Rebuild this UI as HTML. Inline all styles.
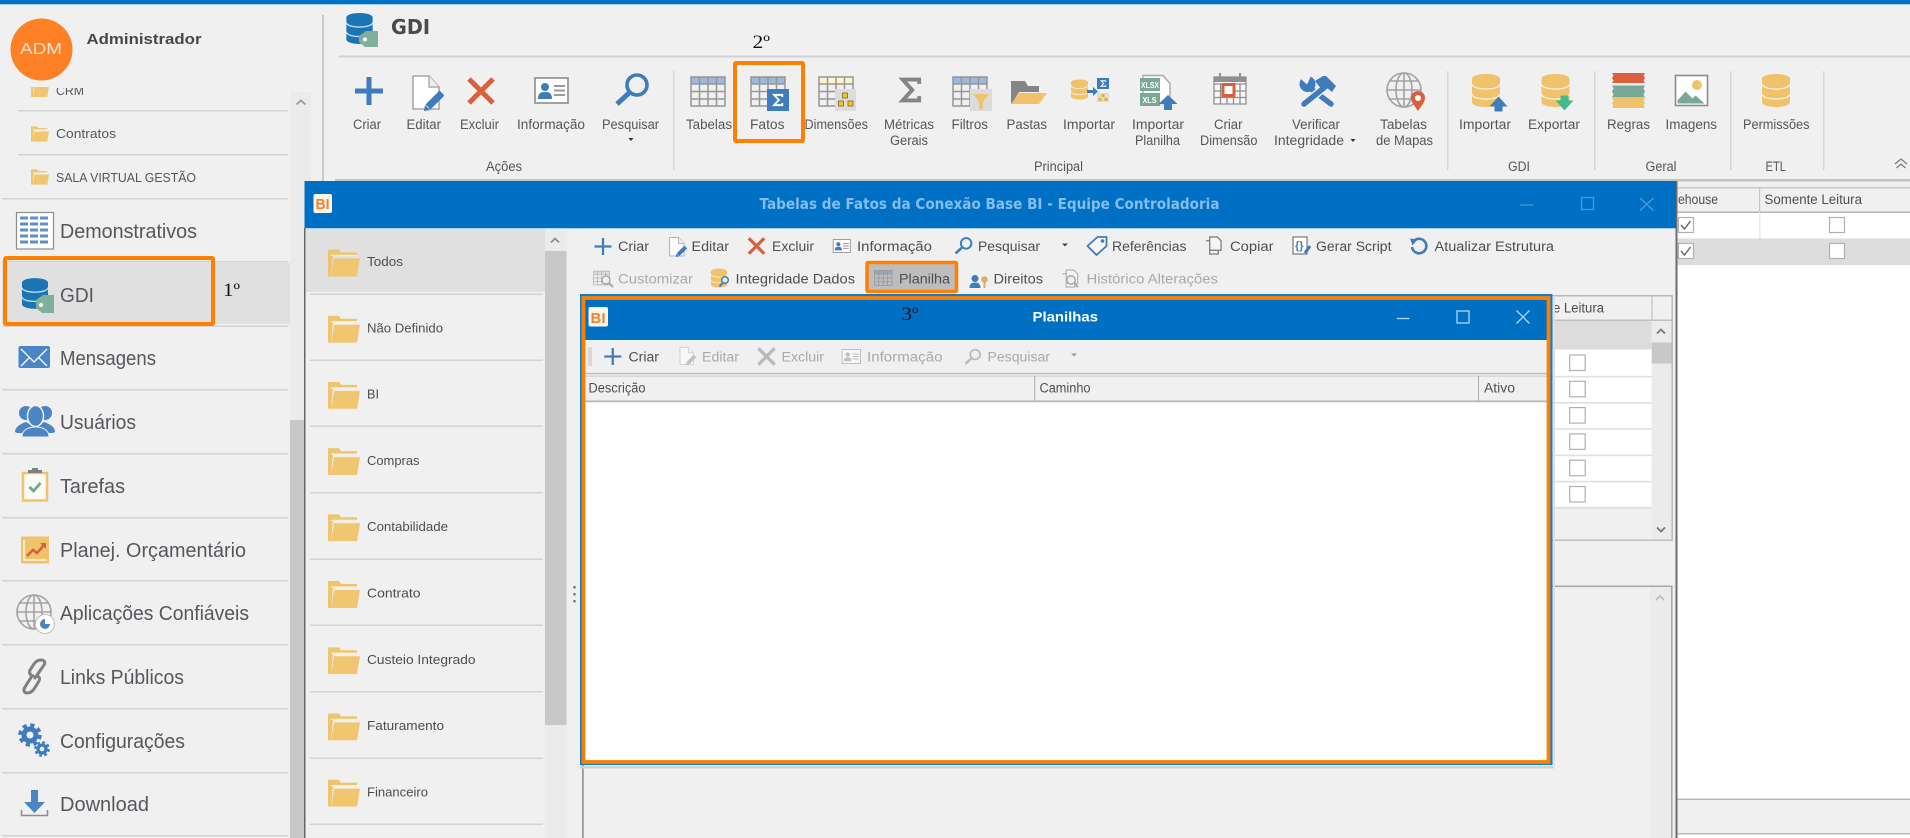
<!DOCTYPE html>
<html lang="pt-BR">
<head>
<meta charset="utf-8">
<title>GDI</title>
<style>
html,body{margin:0;padding:0;width:1910px;height:838px;overflow:hidden;background:#f0f0f0}
svg{display:block;position:absolute;left:0;top:0;filter:blur(.3px)}
text{font-family:"Liberation Sans",sans-serif;white-space:pre}
.s{font-size:20.5px;fill:#54575c}
.r{font-size:13.5px;fill:#54565a}
.f{font-size:13px;fill:#4c4e54}
.m{font-size:12.5px;fill:#54565a}
.t{font-size:13.5px;fill:#4c4e52}
.d{font-size:13.5px;fill:#a9a9a9}
text.k{font-size:19px;fill:#111;font-family:"Liberation Serif",serif}
</style>
</head>
<body>
<svg width="1910" height="838" viewBox="0 0 1910 838" xmlns="http://www.w3.org/2000/svg">
<defs>
<symbol id="folder" viewBox="0 0 32 27"><path d="M0 0h11l2 3h16v3H5L3 27H0z" fill="#eec56f"/><path d="M6 9h26l-3 18H3z" fill="#f0c670"/><path d="M3 6h26" stroke="#f9efd8" stroke-width="1.2"/></symbol>
<symbol id="db" viewBox="0 0 28 33"><path d="M0 5C0 2 6 0 14 0s14 2 14 5v23c0 3-6 5-14 5S0 31 0 28z" fill="currentColor"/><path d="M0 10c0 3 6 5 14 5s14-2 14-5M0 20c0 3 6 5 14 5s14-2 14-5" fill="none" stroke="#fff" stroke-opacity=".75" stroke-width="1.4"/></symbol>
<symbol id="plus" viewBox="0 0 28 28"><path d="M14 0v28M0 14h28" stroke="currentColor" stroke-width="5" fill="none"/></symbol>
<symbol id="plusT" viewBox="0 0 18 18"><path d="M9 0v18M0 9h18" stroke="currentColor" stroke-width="2.4" fill="none"/></symbol>
<symbol id="x" viewBox="0 0 28 28"><path d="M2 2l24 24M26 2L2 26" stroke="currentColor" stroke-width="5" fill="none"/></symbol>
<symbol id="edit" viewBox="0 0 32 36"><path d="M1 1h16l10 11v22H1z" fill="#fff" stroke="#a8a8a8" stroke-width="1.6"/><path d="M17 1v11h10" fill="#eee" stroke="#a8a8a8" stroke-width="1.4"/><path d="M30 18L16 32" stroke="currentColor" stroke-width="7" fill="none"/><path d="M12 36l1-6 5 5z" fill="currentColor"/></symbol>
<symbol id="card" viewBox="0 0 35 27"><rect x="1" y="1" width="33" height="25" fill="#fff" stroke="#8c8c8c" stroke-width="1.6"/><circle cx="11" cy="10" r="4" fill="currentColor"/><path d="M4 22c0-6 3-7 7-7s7 1 7 7z" fill="currentColor"/><path d="M20 9h11M20 13.500h11M20 18h11" stroke="#9a9a9a" stroke-width="2" fill="none"/></symbol>
<symbol id="search" viewBox="0 0 36 34"><circle cx="23" cy="12" r="10" fill="none" stroke="currentColor" stroke-width="3.6"/><path d="M15 20L3 31" stroke="currentColor" stroke-width="5" fill="none"/></symbol>
<symbol id="grid" viewBox="0 0 36 31"><rect x="1" y="1" width="34" height="7" fill="currentColor"/><path d="M1 1h34v29H1zM1 8h34M1 15.500h34M1 23h34M9.500 1v29M18 1v29M26.500 1v29" fill="none" stroke="#969696" stroke-width="1.5"/></symbol>
<symbol id="sigma" viewBox="0 0 28 30"><path d="M24 8V3H5l11 12L5 27h19v-5" fill="none" stroke="currentColor" stroke-width="4.5"/></symbol>
<symbol id="globe" viewBox="0 0 36 36"><circle cx="18" cy="18" r="17" fill="none" stroke="#a2a2a2" stroke-width="1.6"/><ellipse cx="18" cy="18" rx="8" ry="17" fill="none" stroke="#a2a2a2" stroke-width="1.6"/><path d="M18 1v34M1 18h34M4 9h28M4 27h28" stroke="#a2a2a2" stroke-width="1.6" fill="none"/></symbol>
<symbol id="docs" viewBox="0 0 18 20"><path d="M5 1h8l4 4v10H5z M1 5h4v14h9v-4" fill="#f6f6f6" stroke="currentColor" stroke-width="1.3"/></symbol>
<symbol id="gear" viewBox="0 0 24 24"><circle cx="12" cy="12" r="6" fill="none" stroke="currentColor" stroke-width="5"/><circle cx="12" cy="12" r="10" fill="none" stroke="currentColor" stroke-width="3.500" stroke-dasharray="4.200 3.650"/></symbol>
</defs>

<!-- background -->
<rect width="1910" height="838" fill="#f0f0f0"/>
<rect width="1910" height="4" fill="#0070c5"/>
<rect y="4" width="1910" height="1" fill="#9fd0f0"/>

<!-- sidebar top list clipped -->
<rect x="290" y="92" width="21" height="746" fill="#ebebeb"/>
<rect x="290" y="420" width="15" height="418" fill="#c8c8c8"/>
<path d="M296.500 104.500l4.500-4 4.500 4" stroke="#9a9a9a" stroke-width="1.800" fill="none"/>

<use href="#folder" x="31" y="82" width="18" height="15"/>
<rect x="31" y="78" width="18" height="9" fill="#f0f0f0"/>
<text class="m" x="56" y="95" textLength="28" lengthAdjust="spacingAndGlyphs">CRM</text>
<rect x="54" y="80" width="34" height="8" fill="#f0f0f0"/>
<rect x="18" y="110" width="270" height="1.500" fill="#d4d4d4"/>
<use href="#folder" x="31" y="126" width="18" height="16"/>
<text class="m" x="56" y="138" textLength="60" lengthAdjust="spacingAndGlyphs">Contratos</text>
<rect x="18" y="154" width="270" height="1.500" fill="#d4d4d4"/>
<use href="#folder" x="31" y="169" width="18" height="16"/>
<text class="m" x="56" y="182" textLength="140" lengthAdjust="spacingAndGlyphs">SALA VIRTUAL GESTÃO</text>
<rect x="2" y="198" width="286" height="1.500" fill="#d4d4d4"/>

<!-- avatar -->
<circle cx="41.500" cy="49.500" r="31" fill="#fd8024"/>
<text x="20" y="54" font-size="16" fill="#ffe3cf" textLength="42" lengthAdjust="spacingAndGlyphs">ADM</text>
<text x="86.500" y="44" font-size="15" font-weight="700" fill="#45474c" textLength="115" lengthAdjust="spacingAndGlyphs">Administrador</text>
<rect x="322" y="15" width="2" height="166" fill="#cacaca"/>

<!-- sidebar items -->
<rect x="16.500" y="212.500" width="37" height="36.500" fill="#fff" stroke="#8c8c8c" stroke-width="1.200"/>
<path d="M20 218h30M20 224h30M20 230h30M20 236h30M20 242h30" stroke="#5f8fc4" stroke-width="3" stroke-dasharray="8 2" fill="none"/>
<text class="s" x="60" y="238" textLength="137" lengthAdjust="spacingAndGlyphs">Demonstrativos</text>
<rect x="2" y="261" width="286" height="1.500" fill="#d4d4d4"/>
<rect x="2" y="263" width="288" height="61" fill="#e0e0e0"/>
<use href="#db" x="22" y="278" width="26" height="31" color="#1b75b5"/>
<path d="M36 300l7-5h11v18H42l-6-5z" fill="#7fb09a"/><circle cx="41" cy="305" r="2" fill="#fff"/>
<text class="s" x="60" y="302" textLength="34" lengthAdjust="spacingAndGlyphs">GDI</text>
<text class="k" x="223" y="296" textLength="17" lengthAdjust="spacingAndGlyphs">1º</text>
<rect x="2" y="325.500" width="286" height="1.500" fill="#d4d4d4"/>

<rect x="18.500" y="346" width="31.500" height="22" rx="2" fill="#4a86c6"/>
<path d="M21 349l13 13 13-13M21 366l9-9M47 366l-9-9" stroke="#f4f8fc" stroke-width="1.400" fill="none"/>
<text class="s" x="60" y="365" textLength="96" lengthAdjust="spacingAndGlyphs">Mensagens</text>
<rect x="2" y="389" width="286" height="1.500" fill="#d4d4d4"/>

<g fill="#4a86c6">
<circle cx="26" cy="413" r="7"/><circle cx="45" cy="413" r="7"/>
<path d="M15 432c0-5 5-8 11-10l10 6-4 5H17zM55 432c0-5-5-8-11-10l-10 6 4 5h15z"/>
</g>
<ellipse cx="35.500" cy="416" rx="8" ry="10.500" fill="#4a86c6" stroke="#f0f0f0" stroke-width="1.500"/>
<path d="M22 437c0-7 6-10 13.500-10S49 430 49 437z" fill="#4a86c6" stroke="#f0f0f0" stroke-width="1"/>
<text class="s" x="60" y="429" textLength="76" lengthAdjust="spacingAndGlyphs">Usuários</text>
<rect x="2" y="453" width="286" height="1.500" fill="#d4d4d4"/>

<rect x="23" y="473" width="24" height="27.500" fill="#fbfaf5" stroke="#efc26b" stroke-width="2.500"/>
<path d="M28 473v-3h4v-2h6v2h4v3z" fill="#7f7f7f"/>
<path d="M29.500 487l4 4 7-8" stroke="#6fa78e" stroke-width="2.800" fill="none"/>
<text class="s" x="60" y="493" textLength="65" lengthAdjust="spacingAndGlyphs">Tarefas</text>
<rect x="2" y="517" width="286" height="1.500" fill="#d4d4d4"/>

<rect x="21" y="536.500" width="28" height="27" fill="#efc26b"/>
<path d="M24 540v20h23" stroke="#fff" stroke-width="1.200" fill="none"/>
<path d="M27 556l6-6 4 3 7-8" stroke="#d9603f" stroke-width="2.600" fill="none"/><path d="M40 543h6v6z" fill="#d9603f"/>
<text class="s" x="60" y="557" textLength="186" lengthAdjust="spacingAndGlyphs">Planej. Orçamentário</text>
<rect x="2" y="580" width="286" height="1.500" fill="#d4d4d4"/>

<use href="#globe" x="16" y="594" width="36" height="36"/>
<circle cx="45" cy="624" r="9.500" fill="#fff" stroke="#bdbdbd"/>
<path d="M45 619v5h5a5 5 0 1 1-5-5z" fill="#4a86c6"/>
<text class="s" x="60" y="620" textLength="189" lengthAdjust="spacingAndGlyphs">Aplicações Confiáveis</text>
<rect x="2" y="644" width="286" height="1.500" fill="#d4d4d4"/>

<g fill="none" stroke="#808080" stroke-width="3" stroke-linecap="round">
<path d="M35 678l9-13c2-3 0-5-3-5s-5 1-7 4l-4 6c-1 3 0 5 3 6"/>
<path d="M37 676c3 1 3 3 2 5l-5 8c-2 3-4 4-7 4s-4-3-2-6l7-11"/>
</g>
<text class="s" x="60" y="684" textLength="124" lengthAdjust="spacingAndGlyphs">Links Públicos</text>
<rect x="2" y="708" width="286" height="1.500" fill="#d4d4d4"/>

<use href="#gear" x="18" y="723" width="24" height="24" color="#3f7cbc"/>
<use href="#gear" x="34" y="741" width="16" height="16" color="#3f7cbc"/>
<text class="s" x="60" y="748" textLength="125" lengthAdjust="spacingAndGlyphs">Configurações</text>
<rect x="2" y="772" width="286" height="1.500" fill="#d4d4d4"/>

<path d="M31 790h7v12h7l-10.500 11L24 802h7z" fill="#4a86c6"/>
<path d="M21.500 810v5.500h26V810" stroke="#8c8c8c" stroke-width="1.500" fill="none"/>
<text class="s" x="60" y="811" textLength="89" lengthAdjust="spacingAndGlyphs">Download</text>
<rect x="2" y="835" width="286" height="1.500" fill="#d4d4d4"/>

<!-- GDI header -->
<use href="#db" x="346" y="13" width="27" height="31" color="#1b75b5"/>
<path d="M359 36l7-5h12v16h-13l-6-5z" fill="#7fb09a"/><circle cx="365" cy="39.500" r="2" fill="#fff"/>
<text x="391" y="34" font-size="20" font-weight="700" fill="#4b4a48" style="font-family:'DejaVu Sans',sans-serif" textLength="39" lengthAdjust="spacingAndGlyphs">GDI</text>
<rect x="339" y="55.500" width="1571" height="2" fill="#d2d2d2"/>

<!-- ribbon icons -->
<use href="#plus" x="355" y="77" width="28" height="28" color="#3f7cbc"/>
<use href="#edit" x="412" y="75" width="32" height="36" color="#3f7cbc"/>
<use href="#x" x="467" y="77" width="28" height="28" color="#d9603f"/>
<use href="#card" x="534" y="77" width="35" height="27" color="#3f7cbc"/>
<use href="#search" x="614" y="73" width="36" height="34" color="#3f7cbc"/>
<use href="#grid" x="690" y="76" width="36" height="31" color="#9db8d8"/>
<use href="#grid" x="750" y="76" width="36" height="31" color="#9db8d8"/>
<rect x="767" y="89" width="22" height="22" fill="#3f7cbc"/>
<use href="#sigma" x="772" y="92" width="12" height="16" color="#fff"/>
<use href="#grid" x="818" y="76" width="36" height="31" color="#fdf3cf"/>
<rect x="835" y="89" width="21" height="22" fill="#dcdcdc"/>
<g fill="#f2c811" stroke="#7a6a30" stroke-width=".8"><rect x="842.500" y="93" width="5" height="5"/><rect x="838.500" y="101" width="5" height="5"/><rect x="848" y="101" width="5" height="5"/></g>
<use href="#sigma" x="898" y="77" width="25" height="26" color="#858585"/>
<use href="#grid" x="952" y="76" width="36" height="31" color="#9db8d8"/>
<rect x="970" y="89" width="22" height="22" fill="#dcdcdc"/>
<path d="M973 94h16l-6 8v7h-4v-7z" fill="#efc26b"/>
<path d="M1011 104V81h14l3 5h11v6h-20l-6 10z" fill="#858585"/>
<path d="M1011 104l8-11h28l-8 11z" fill="#efc26b"/>
<use href="#db" x="1071" y="79" width="17" height="21" color="#efc26b"/>
<path d="M1087 90h6v-3l5 4.500-5 4.500v-3h-6z" fill="#3f7cbc"/>
<rect x="1097" y="78" width="12" height="11" fill="#3f7cbc"/><use href="#sigma" x="1100" y="79.500" width="6.500" height="8" color="#fff"/>
<rect x="1097" y="93" width="12" height="9" fill="#dcdcdc"/>
<g fill="#e3b531"><rect x="1101.500" y="94" width="3" height="3"/><rect x="1098.500" y="98" width="3" height="3"/><rect x="1104.500" y="98" width="3" height="3"/></g>
<!-- import sheet -->
<path d="M1143 75.500h20l7 8v20h-27z" fill="#fff" stroke="#a8a8a8" stroke-width="1.400"/>
<rect x="1140" y="78" width="20" height="13" fill="#7aa896"/><rect x="1140" y="93" width="20" height="13" fill="#7aa896"/>
<text x="1141" y="88" font-size="8" font-weight="700" fill="#fff" textLength="18" lengthAdjust="spacingAndGlyphs">XLSX</text>
<text x="1142.500" y="103" font-size="8" font-weight="700" fill="#fff" textLength="14" lengthAdjust="spacingAndGlyphs">XLS</text>
<path d="M1168 95l9.500 9h-5.500v6h-8v-6h-5.500z" fill="#3f7cbc"/>
<!-- calendar -->
<path d="M1214 77h32v27h-32zM1214 84h32M1214 91h32M1214 97.500h32M1220.500 84v20M1227 84v20M1233.500 84v20M1240 84v20" fill="#f7f7f7" stroke="#8f8f8f" stroke-width="1.300"/>
<rect x="1214" y="77" width="32" height="5" fill="#8f8f8f"/><path d="M1220 73v6M1240 73v6" stroke="#8f8f8f" stroke-width="2"/>
<rect x="1223" y="84.500" width="11" height="11" fill="#fff" stroke="#d9603f" stroke-width="3"/>
<!-- tools: wrench + hammer -->
<path d="M1310 88l21 16" stroke="#3f7cbc" stroke-width="5.500" fill="none" stroke-linecap="round"/>
<circle cx="1307.500" cy="84" r="8" fill="#3f7cbc"/>
<path d="M1307 84.500l-9-8 5-3 6-.5 2 3z" fill="#f0f0f0"/>
<path d="M1325 87l-21 17" stroke="#f0f0f0" stroke-width="8.500" fill="none"/>
<path d="M1325 87l-21 17" stroke="#3f7cbc" stroke-width="5.500" fill="none" stroke-linecap="round"/>
<path d="M1315 81l8-5h3l10 10-4 6-6-5-4 3z" fill="#3f7cbc"/>
<!-- map globe -->
<use href="#globe" x="1386" y="72" width="36" height="36"/>
<path d="M1418 111c-4-6-7-9-7-13a7 7 0 0 1 14 0c0 4-3 7-7 13z" fill="#d9603f"/><circle cx="1418" cy="98" r="3" fill="#fff"/>
<!-- gdi -->
<use href="#db" x="1472" y="74" width="28" height="33" color="#efc26b"/>
<path d="M1498.500 96.500l9 10h-5v5h-8v-5h-5z" fill="#3f7cbc"/>
<use href="#db" x="1541.500" y="74" width="28" height="33" color="#efc26b"/>
<path d="M1564.500 110.500l-9-10h5v-5h8v5h5z" fill="#43b98e"/>
<!-- regras -->
<path d="M1612 73h33l-1.500 2.500 1.500 2.500-1.500 2.500 1.500 2.500h-33l1.500-2.500-1.500-2.500 1.500-2.500z" fill="#dc6040"/>
<path d="M1612 85.500h33l-1.500 3 1.500 3-1.500 3 1.500 3h-33l1.500-3-1.500-3 1.500-3z" fill="#7aa896"/>
<path d="M1612 98h33l-1.500 2.500 1.500 2.500-1.500 2.500 1.500 2.500h-33l1.500-2.500-1.500-2.500 1.500-2.500z" fill="#efc26b"/>
<!-- imagens -->
<rect x="1675.500" y="75.500" width="32" height="30" fill="#fff" stroke="#8c8c8c" stroke-width="1.600"/>
<circle cx="1697" cy="85" r="5" fill="#efc26b"/>
<path d="M1677.500 103.500v-3l8-9 7 7 3-3 9 8z" fill="#7aa896"/>
<use href="#db" x="1762" y="74" width="28" height="33" color="#efc26b"/>

<!-- ribbon separators -->
<g fill="#d8d8d8"><rect x="673" y="71" width="1.500" height="99"/><rect x="1447" y="71" width="1.500" height="99"/><rect x="1594" y="71" width="1.500" height="99"/><rect x="1730" y="71" width="1.500" height="99"/><rect x="1823" y="71" width="1.500" height="99"/></g>

<!-- ribbon labels -->
<g>
<text class="r" x="353" y="129" textLength="28" lengthAdjust="spacingAndGlyphs">Criar</text>
<text class="r" x="406.500" y="129" textLength="34.500" lengthAdjust="spacingAndGlyphs">Editar</text>
<text class="r" x="460" y="129" textLength="39" lengthAdjust="spacingAndGlyphs">Excluir</text>
<text class="r" x="517" y="129" textLength="68" lengthAdjust="spacingAndGlyphs">Informação</text>
<text class="r" x="602" y="129" textLength="57" lengthAdjust="spacingAndGlyphs">Pesquisar</text>
<path d="M628.500 138h5l-2.500 3z" fill="#333"/>
<text class="r" x="486" y="171" textLength="36" lengthAdjust="spacingAndGlyphs">Ações</text>
<text class="r" x="686" y="129" textLength="46" lengthAdjust="spacingAndGlyphs">Tabelas</text>
<text class="r" x="750" y="129" textLength="34.500" lengthAdjust="spacingAndGlyphs">Fatos</text>
<text class="r" x="804.500" y="129" textLength="63.500" lengthAdjust="spacingAndGlyphs">Dimensões</text>
<text class="r" x="884" y="129" textLength="50" lengthAdjust="spacingAndGlyphs">Métricas</text>
<text class="r" x="890" y="145" textLength="38" lengthAdjust="spacingAndGlyphs">Gerais</text>
<text class="r" x="951.500" y="129" textLength="36.500" lengthAdjust="spacingAndGlyphs">Filtros</text>
<text class="r" x="1006.500" y="129" textLength="40.500" lengthAdjust="spacingAndGlyphs">Pastas</text>
<text class="r" x="1063" y="129" textLength="52" lengthAdjust="spacingAndGlyphs">Importar</text>
<text class="r" x="1132" y="129" textLength="52" lengthAdjust="spacingAndGlyphs">Importar</text>
<text class="r" x="1135" y="145" textLength="45" lengthAdjust="spacingAndGlyphs">Planilha</text>
<text class="r" x="1214" y="129" textLength="28.500" lengthAdjust="spacingAndGlyphs">Criar</text>
<text class="r" x="1200" y="145" textLength="57.500" lengthAdjust="spacingAndGlyphs">Dimensão</text>
<text class="r" x="1034" y="171" textLength="49" lengthAdjust="spacingAndGlyphs">Principal</text>
<text class="r" x="1292" y="129" textLength="48" lengthAdjust="spacingAndGlyphs">Verificar</text>
<text class="r" x="1274" y="145" textLength="70" lengthAdjust="spacingAndGlyphs">Integridade</text>
<path d="M1350.500 139h5l-2.500 3z" fill="#333"/>
<text class="r" x="1380" y="129" textLength="47" lengthAdjust="spacingAndGlyphs">Tabelas</text>
<text class="r" x="1376" y="145" textLength="57" lengthAdjust="spacingAndGlyphs">de Mapas</text>
<text class="r" x="1459" y="129" textLength="52" lengthAdjust="spacingAndGlyphs">Importar</text>
<text class="r" x="1528" y="129" textLength="52" lengthAdjust="spacingAndGlyphs">Exportar</text>
<text class="r" x="1508" y="171" textLength="22" lengthAdjust="spacingAndGlyphs">GDI</text>
<text class="r" x="1607" y="129" textLength="43" lengthAdjust="spacingAndGlyphs">Regras</text>
<text class="r" x="1665.500" y="129" textLength="51.500" lengthAdjust="spacingAndGlyphs">Imagens</text>
<text class="r" x="1645.500" y="171" textLength="31" lengthAdjust="spacingAndGlyphs">Geral</text>
<text class="r" x="1743" y="129" textLength="66.500" lengthAdjust="spacingAndGlyphs">Permissões</text>
<text class="r" x="1765.500" y="171" textLength="20.500" lengthAdjust="spacingAndGlyphs">ETL</text>
<path d="M1895 164l6-5 6 5M1896.500 168l4.500-4 4.500 4" stroke="#777" stroke-width="1.200" fill="none"/>
</g>
<text class="k" x="752.500" y="48" textLength="17.500" lengthAdjust="spacingAndGlyphs">2º</text>

<rect x="335" y="179" width="1575" height="2.500" fill="#c4c4c4"/>

<!-- right grid behind main window -->
<rect x="1677" y="187" width="233" height="1.500" fill="#c8c8c8"/>
<rect x="1677" y="212" width="233" height="587" fill="#fff"/>
<rect x="1677" y="211.500" width="233" height="1.500" fill="#b4b4b4"/>
<rect x="1759" y="187" width="1.200" height="78" fill="#c4c4c4"/>
<text class="t" x="1678" y="204" textLength="40" lengthAdjust="spacingAndGlyphs">ehouse</text>
<text class="t" x="1764.500" y="204" textLength="97.500" lengthAdjust="spacingAndGlyphs">Somente Leitura</text>
<rect x="1677" y="238.500" width="233" height="26.500" fill="#dcdcdc"/>
<rect x="1759" y="212" width="1" height="26" fill="#eaeaea"/>
<g fill="#fff" stroke="#b0b0b0" stroke-width="1.200">
<rect x="1678.500" y="217.500" width="15" height="15"/><rect x="1678.500" y="243.500" width="15" height="15"/>
<rect x="1829.500" y="217.500" width="15" height="15"/><rect x="1829.500" y="243.500" width="15" height="15"/>
</g>
<path d="M1681 225l3.500 4 6-8M1681 251l3.500 4 6-8" stroke="#666" stroke-width="1.400" fill="none"/>
<rect x="1677" y="799" width="233" height="34" fill="#f0f0f0"/>
<rect x="1677" y="798.500" width="233" height="1.500" fill="#b8b8b8"/>
<rect x="1677" y="833" width="233" height="1.500" fill="#b8b8b8"/>
<rect x="1677" y="834.500" width="233" height="4" fill="#fff"/>

<!-- MAIN WINDOW -->
<rect x="304.500" y="181" width="1372.500" height="657" fill="#f0f0f0"/>
<rect x="304" y="228" width="1.500" height="610" fill="#666"/>
<rect x="1675.500" y="181" width="2" height="657" fill="#6c6c6c"/>
<rect x="304.500" y="181" width="1371.500" height="47" fill="#0070c5"/>
<rect x="305.500" y="228" width="1370" height="1" fill="#a9d2ee"/>
<rect x="313.500" y="194" width="18.500" height="19" rx="2" fill="#fdf6ee"/>
<text x="315.500" y="209" font-size="15" font-weight="700" fill="#f4812c" textLength="14" lengthAdjust="spacingAndGlyphs">BI</text>
<text x="759.500" y="209" font-size="15" font-weight="700" fill="#84bcea" style="font-family:'DejaVu Sans',sans-serif" textLength="460" lengthAdjust="spacingAndGlyphs">Tabelas de Fatos da Conexão Base BI - Equipe Controladoria</text>
<path d="M1520 205h13" stroke="#4b9ade" stroke-width="1.300"/>
<rect x="1581.500" y="197.500" width="12" height="12" fill="none" stroke="#4b9ade" stroke-width="1.300"/>
<path d="M1640 198l13.500 12.500M1653.500 198L1640 210.500" stroke="#4b9ade" stroke-width="1.300"/>

<!-- list panel -->
<rect x="306" y="229" width="239" height="63" fill="#e0e0e0"/>
<rect x="545" y="229" width="21.500" height="609" fill="#ebebeb"/>
<rect x="545" y="251" width="21.500" height="474" fill="#c8c8c8"/>
<path d="M551 242.500l4-4 4 4" stroke="#8c8c8c" stroke-width="1.800" fill="none"/>
<g fill="#d4d4d4">
<rect x="310" y="293.500" width="233" height="1.500"/><rect x="310" y="359.500" width="233" height="1.500"/><rect x="310" y="425.500" width="233" height="1.500"/><rect x="310" y="492" width="233" height="1.500"/><rect x="310" y="558.500" width="233" height="1.500"/><rect x="310" y="624.500" width="233" height="1.500"/><rect x="310" y="691" width="233" height="1.500"/><rect x="310" y="757.500" width="233" height="1.500"/><rect x="310" y="823.500" width="233" height="1.500"/>
</g>
<use href="#folder" x="328" y="249.500" width="32" height="27"/>
<use href="#folder" x="328" y="315.700" width="32" height="27"/>
<use href="#folder" x="328" y="381.900" width="32" height="27"/>
<use href="#folder" x="328" y="448.100" width="32" height="27"/>
<use href="#folder" x="328" y="514.300" width="32" height="27"/>
<use href="#folder" x="328" y="581" width="32" height="27"/>
<use href="#folder" x="328" y="647.200" width="32" height="27"/>
<use href="#folder" x="328" y="713.400" width="32" height="27"/>
<use href="#folder" x="328" y="779.600" width="32" height="27"/>
<text class="f" x="367" y="266" textLength="36" lengthAdjust="spacingAndGlyphs">Todos</text>
<text class="f" x="367" y="332.500" textLength="76" lengthAdjust="spacingAndGlyphs">Não Definido</text>
<text class="f" x="367" y="398.500" textLength="12" lengthAdjust="spacingAndGlyphs">BI</text>
<text class="f" x="367" y="465" textLength="52.500" lengthAdjust="spacingAndGlyphs">Compras</text>
<text class="f" x="367" y="531" textLength="81" lengthAdjust="spacingAndGlyphs">Contabilidade</text>
<text class="f" x="367" y="597.500" textLength="53.500" lengthAdjust="spacingAndGlyphs">Contrato</text>
<text class="f" x="367" y="664" textLength="108.500" lengthAdjust="spacingAndGlyphs">Custeio Integrado</text>
<text class="f" x="367" y="730" textLength="77" lengthAdjust="spacingAndGlyphs">Faturamento</text>
<text class="f" x="367" y="796.500" textLength="61" lengthAdjust="spacingAndGlyphs">Financeiro</text>
<g fill="#666"><rect x="573.500" y="586" width="2" height="2.500"/><rect x="573.500" y="593" width="2" height="2.500"/><rect x="573.500" y="600" width="2" height="2.500"/></g>

<!-- window toolbar row 1 -->
<use href="#plusT" x="594" y="238" width="18" height="17" color="#3f7cbc"/>
<text class="t" x="618" y="251" textLength="31" lengthAdjust="spacingAndGlyphs">Criar</text>
<use href="#edit" x="669" y="237" width="18" height="20" color="#3f7cbc"/>
<text class="t" x="691.500" y="251" textLength="37.500" lengthAdjust="spacingAndGlyphs">Editar</text>
<use href="#x" x="747" y="237" width="19" height="18" color="#d9603f"/>
<text class="t" x="772" y="251" textLength="42" lengthAdjust="spacingAndGlyphs">Excluir</text>
<use href="#card" x="831.500" y="239" width="20.500" height="14" color="#3f7cbc"/>
<text class="t" x="857" y="251" textLength="75" lengthAdjust="spacingAndGlyphs">Informação</text>
<use href="#search" x="954" y="237" width="19" height="18" color="#3f7cbc"/>
<text class="t" x="978" y="251" textLength="62" lengthAdjust="spacingAndGlyphs">Pesquisar</text>
<path d="M1062 243.500h6l-3 3z" fill="#444"/>
<path d="M1087.500 246l10-9h9v9l-10 9z" fill="#f6f6f6" stroke="#3f7cbc" stroke-width="1.800"/><circle cx="1102.500" cy="241" r="1.800" fill="#3f7cbc"/>
<text class="t" x="1112" y="251" textLength="74.500" lengthAdjust="spacingAndGlyphs">Referências</text>
<use href="#docs" x="1205" y="236" width="17" height="19" color="#777"/>
<text class="t" x="1230" y="251" textLength="43.500" lengthAdjust="spacingAndGlyphs">Copiar</text>
<rect x="1293" y="237" width="14" height="17" fill="#fff" stroke="#777" stroke-width="1.200"/>
<text x="1295" y="249" font-size="11" font-weight="700" fill="#3f7cbc">{}</text>
<path d="M1310 246l-5 7" stroke="#3f7cbc" stroke-width="3"/>
<text class="t" x="1316" y="251" textLength="75.500" lengthAdjust="spacingAndGlyphs">Gerar Script</text>
<path d="M1414 241a7.200 7.200 0 1 1-2 6" fill="none" stroke="#3f7cbc" stroke-width="2.600"/><path d="M1410 238.500l7.500 1-5 6z" fill="#3f7cbc"/>
<text class="t" x="1434.500" y="251" textLength="119.500" lengthAdjust="spacingAndGlyphs">Atualizar Estrutura</text>

<!-- window toolbar row 2 -->
<use href="#grid" x="593" y="270" width="17" height="16" color="#d6d6d6" opacity=".7"/>
<circle cx="606" cy="280" r="4" fill="#f0f0f0" stroke="#a8a8a8" stroke-width="1.400"/><path d="M609 283l4 4" stroke="#a8a8a8" stroke-width="2"/>
<text class="d" x="618" y="283.500" textLength="75" lengthAdjust="spacingAndGlyphs">Customizar</text>
<use href="#db" x="711" y="268" width="16" height="20" color="#efc26b"/>
<circle cx="725" cy="280" r="3.300" fill="#f0f0f0" stroke="#3f7cbc" stroke-width="1.500"/><path d="M722.500 283l-3 3.500" stroke="#3f7cbc" stroke-width="2"/>
<text class="t" x="735.500" y="283.500" textLength="119.500" lengthAdjust="spacingAndGlyphs">Integridade Dados</text>
<rect x="867" y="262.500" width="89.500" height="29" rx="1" fill="#bdbdbd" stroke="#ff8000" stroke-width="3.500"/>
<use href="#grid" x="873" y="270" width="20.500" height="16" color="#93a9c6"/>
<text class="t" x="899" y="283.500" textLength="51" lengthAdjust="spacingAndGlyphs">Planilha</text>
<circle cx="975" cy="278.500" r="3.500" fill="#3f7cbc"/><path d="M969.500 288c0-4 2-5.500 5.500-5.500s5.500 1.500 5.500 5.500z" fill="#3f7cbc"/>
<circle cx="984.500" cy="279.500" r="3.300" fill="#d9b15c"/><rect x="983.500" y="281" width="2" height="7" fill="#d9b15c"/>
<text class="t" x="993.500" y="283.500" textLength="49.500" lengthAdjust="spacingAndGlyphs">Direitos</text>
<use href="#docs" x="1061" y="269" width="18" height="19" color="#b4b4b4"/>
<circle cx="1071" cy="280" r="4.200" fill="#f0f0f0" stroke="#a8a8a8" stroke-width="1.500"/><path d="M1074 283l4 4" stroke="#a8a8a8" stroke-width="2"/>
<text class="d" x="1086.500" y="283.500" textLength="131.500" lengthAdjust="spacingAndGlyphs">Histórico Alterações</text>

<!-- grid behind sub window -->
<rect x="1552" y="295" width="120" height="1.500" fill="#b8b8b8"/>
<rect x="1552" y="319.500" width="120" height="1.500" fill="#c0c0c0"/>
<rect x="1671.500" y="295" width="1.300" height="245.500" fill="#b4b4b4"/>
<rect x="1651.500" y="295" width="1" height="25" fill="#b8b8b8"/>
<text class="t" x="1553" y="312.500" textLength="51" lengthAdjust="spacingAndGlyphs">e Leitura</text>
<rect x="1552" y="321" width="99.500" height="28.500" fill="#dcdcdc"/>
<rect x="1552" y="349.500" width="99.500" height="158" fill="#fff"/>
<g fill="#e0e0e0"><rect x="1552" y="375.800" width="99.500" height="1.600"/><rect x="1552" y="402" width="99.500" height="1.600"/><rect x="1552" y="428.200" width="99.500" height="1.600"/><rect x="1552" y="454.600" width="99.500" height="1.600"/><rect x="1552" y="480.800" width="99.500" height="1.600"/><rect x="1552" y="506.800" width="99.500" height="2"/></g>
<g fill="#fff" stroke="#b0b0b0" stroke-width="1.200">
<rect x="1569.700" y="355" width="15.500" height="15.500"/><rect x="1569.700" y="381.300" width="15.500" height="15.500"/><rect x="1569.700" y="407.600" width="15.500" height="15.500"/><rect x="1569.700" y="433.900" width="15.500" height="15.500"/><rect x="1569.700" y="460.200" width="15.500" height="15.500"/><rect x="1569.700" y="486.500" width="15.500" height="15.500"/>
</g>
<rect x="1651.700" y="321" width="19.800" height="219" fill="#ebebeb"/>
<rect x="1651.700" y="342.500" width="19.800" height="21" fill="#c8c8c8"/>
<path d="M1657 333.500l4-4 4 4M1657 527.500l4 4 4-4" stroke="#777" stroke-width="1.800" fill="none"/>
<rect x="1552" y="539.500" width="120.800" height="1.300" fill="#b8b8b8"/>

<!-- lower panel -->
<rect x="582.500" y="585.500" width="1089" height="1.600" fill="#a8a8a8"/>
<rect x="582" y="585.500" width="1.800" height="252.500" fill="#9a9a9a"/>
<rect x="1671" y="585.500" width="1.600" height="252.500" fill="#a8a8a8"/>
<rect x="1650" y="587" width="21" height="251" fill="#ebebeb"/>
<path d="M1656 600l4-4 4 4" stroke="#bdbdbd" stroke-width="1.800" fill="none"/>

<!-- SUB WINDOW -->
<rect x="580" y="766" width="974" height="2.500" fill="#d2d2d2"/>
<rect x="1553" y="296" width="2" height="471" fill="#e0e0e0"/>
<rect x="580" y="294" width="972.500" height="471" fill="#0a7fd0"/>
<rect x="583.500" y="298" width="965" height="464" fill="#fff"/>
<rect x="583.500" y="299" width="965" height="41" fill="#0070c5"/>
<rect x="585" y="340" width="962" height="33" fill="#f0f0f0"/>
<rect x="585" y="372.800" width="962" height="1.600" fill="#bcbcbc"/>
<rect x="585" y="375.500" width="962" height="25.500" fill="#f0f0f0"/>
<rect x="585" y="375.500" width="962" height="1" fill="#c4c4c4"/>
<rect x="585" y="400.500" width="962" height="1.700" fill="#b4b4b4"/>
<rect x="1034.200" y="376" width="1" height="25" fill="#aaa"/>
<rect x="1478" y="376" width="1" height="25" fill="#aaa"/>
<rect x="583.500" y="298" width="965" height="464" fill="none" stroke="#ff8000" stroke-width="3.800"/>
<rect x="588.500" y="307" width="19.500" height="19.500" rx="2" fill="#fdf6ee"/>
<text x="590.500" y="323" font-size="15" font-weight="700" fill="#f4812c" textLength="15" lengthAdjust="spacingAndGlyphs">BI</text>
<text class="k" x="901.500" y="320" textLength="17" lengthAdjust="spacingAndGlyphs">3º</text>
<text x="1032.500" y="321.500" font-size="14" font-weight="700" fill="#fff" textLength="65.500" lengthAdjust="spacingAndGlyphs">Planilhas</text>
<path d="M1396.700 318.500h12.600" stroke="#b2d6f2" stroke-width="1.300"/>
<rect x="1457" y="311" width="12" height="12" fill="none" stroke="#b2d6f2" stroke-width="1.300"/>
<path d="M1516.500 310.500l13 13M1529.500 310.500l-13 13" stroke="#b2d6f2" stroke-width="1.300"/>
<path d="M589 347v19M591 347v19" stroke="#c6c6c6" stroke-width="1.100"/>
<use href="#plusT" x="604" y="348" width="17.500" height="17" color="#3f7cbc"/>
<text class="t" x="628.500" y="361.500" textLength="30.500" lengthAdjust="spacingAndGlyphs">Criar</text>
<g opacity=".55">
<use href="#edit" x="679.500" y="346" width="16.500" height="20" color="#9a9a9a"/>
<use href="#x" x="757" y="347" width="19" height="19" color="#8f8f8f"/>
<use href="#card" x="841.500" y="349" width="19.500" height="15" color="#9a9a9a"/>
<use href="#search" x="964" y="348" width="17.500" height="18" color="#8f8f8f"/>
</g>
<text class="d" x="702" y="361.500" textLength="37" lengthAdjust="spacingAndGlyphs">Editar</text>
<text class="d" x="781.500" y="361.500" textLength="42.500" lengthAdjust="spacingAndGlyphs">Excluir</text>
<text class="d" x="867" y="361.500" textLength="75.500" lengthAdjust="spacingAndGlyphs">Informação</text>
<text class="d" x="987.500" y="361.500" textLength="62.500" lengthAdjust="spacingAndGlyphs">Pesquisar</text>
<path d="M1071 353.500h6l-3 3z" fill="#999"/>
<text class="t" x="588.500" y="392.500" textLength="57" lengthAdjust="spacingAndGlyphs">Descrição</text>
<text class="t" x="1039.500" y="392.500" textLength="51" lengthAdjust="spacingAndGlyphs">Caminho</text>
<text class="t" x="1484" y="392.500" textLength="31" lengthAdjust="spacingAndGlyphs">Ativo</text>

<!-- annotation frames -->
<rect x="735" y="63" width="68" height="78" rx="1" fill="none" stroke="#ff8000" stroke-width="4"/>
<rect x="5" y="258" width="208" height="66" rx="1" fill="none" stroke="#ff8000" stroke-width="4"/>
</svg>
</body>
</html>
